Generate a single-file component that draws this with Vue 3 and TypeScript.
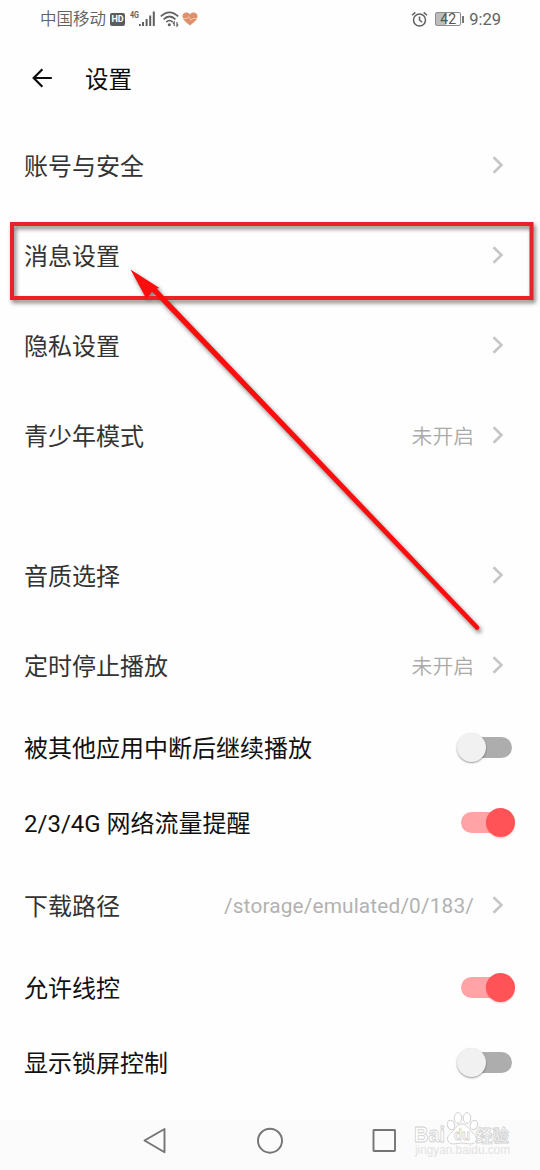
<script setup lang="ts">
interface Row {
  label: string
  kind: 'link' | 'switch'
  value?: string
  path?: boolean
  on?: boolean
}

const groups: Row[][] = [
  [
    { label: '账号与安全', kind: 'link' },
    { label: '消息设置', kind: 'link' },
    { label: '隐私设置', kind: 'link' },
    { label: '青少年模式', kind: 'link', value: '未开启' },
  ],
  [
    { label: '音质选择', kind: 'link' },
    { label: '定时停止播放', kind: 'link', value: '未开启' },
    { label: '被其他应用中断后继续播放', kind: 'switch', on: false },
    { label: '2/3/4G 网络流量提醒', kind: 'switch', on: true },
    { label: '下载路径', kind: 'link', value: '/storage/emulated/0/183/', path: true },
    { label: '允许线控', kind: 'switch', on: true },
    { label: '显示锁屏控制', kind: 'switch', on: false },
  ],
]
</script>

<template>
  <div class="screen">
    <header class="status">
      <div class="status-left">
        <span class="carrier">中国移动</span>
        <span class="hd">HD</span>
        <svg class="signal" width="28" height="20" viewBox="0 0 28 20">
          <text x="0" y="8" class="net" textLength="9" lengthAdjust="spacingAndGlyphs">4G</text>
          <g fill="#606060">
            <rect x="9" y="14" width="1.8" height="2" />
            <rect x="12" y="12" width="2" height="4" />
            <rect x="15.6" y="9" width="2" height="7" />
            <rect x="19.2" y="5.5" width="2" height="10.5" />
            <rect x="22.8" y="1.5" width="2" height="14.5" />
          </g>
        </svg>
        <svg class="wifi" width="20" height="18" viewBox="0 0 20 18">
          <g fill="none" stroke="#606060" stroke-width="1.7">
            <path d="M.8 6.4Q9.5-1.8 18.200 6.4" />
            <path d="M3.6 9.3Q9.5 3.7 15.4 9.3" />
            <path d="M6.300 12.200Q9.500 8.800 12.700 12.200" />
          </g>
          <circle cx="9.3" cy="14.8" r="1.5" fill="#606060" />
          <path d="M14.2 16v-3.800l-1.200 1.400M17 12v3.900l1.200-1.400" stroke="#606060" stroke-width="1.2" fill="none" />
        </svg>
        <svg class="heart" width="16" height="14" viewBox="0 0 16 14">
          <path d="M8 13.5C5 11 .5 8 .5 4.3.5.3 5.8-.7 8 2.5 10.200-.7 15.500.3 15.500 4.300 15.500 8 11 11 8 13.500Z" fill="#dc906c" />
          <path d="M1 6.500h4l1.800-1.700 2.200 3.400 1.700-1.700H15" stroke="#f3cdb9" stroke-width=".9" fill="none" />
        </svg>
      </div>
      <div class="status-right">
        <svg width="17" height="17" viewBox="0 0 17 17" fill="none" stroke="#606060" stroke-width="1.500">
          <circle cx="8.500" cy="9" r="6" />
          <path d="M8.500 5.500V9l2.600 2.200M1 4.200L4.300 1.400M16 4.200L12.700 1.400" />
        </svg>
        <span class="battery"><span>42</span></span>
        <span class="time">9:29</span>
      </div>
    </header>

    <div class="titlebar">
      <svg width="20" height="20" viewBox="0 0 20 20" fill="none" stroke="#0c0c0c" stroke-width="2.200">
        <path d="M19.800 10H2M10.400 1.200L1.700 10l8.700 8.800" />
      </svg>
      <h1>设置</h1>
    </div>

    <main>
      <section v-for="(group, g) in groups" :key="g" class="group">
        <div v-for="row in group" :key="row.label" class="row" :class="row.kind">
          <span class="label">{{ row.label }}</span>
          <template v-if="row.kind === 'link'">
            <span v-if="row.value" class="value" :class="{ path: row.path }">{{ row.value }}</span>
            <svg class="chevron" width="12" height="18" viewBox="0 0 12 18">
              <path d="M1.500 1.200L9.500 9l-8 7.800" fill="none" stroke="#c6c6c6" stroke-width="2.600" />
            </svg>
          </template>
          <span v-else class="toggle" :class="{ on: row.on }"><i></i></span>
        </div>
      </section>
    </main>

    <nav class="navbar">
      <svg width="540" height="50" viewBox="0 0 540 50" fill="none" stroke="#747474" stroke-width="1.900" stroke-linejoin="round">
        <path d="M144.500 20.500L164.500 9v23.300Z" />
        <circle cx="270" cy="20.700" r="12" />
        <rect x="373.500" y="10" width="21.500" height="21" rx=".5" />
      </svg>
    </nav>

    <svg class="watermark" width="106" height="50" viewBox="0 0 106 50">
      <g fill="#fff" stroke="#d2d2d2" stroke-width="1">
        <ellipse cx="41" cy="15" rx="3.600" ry="4.800" transform="rotate(-20 41 15)" />
        <ellipse cx="48" cy="8" rx="3.800" ry="5.300" />
        <ellipse cx="57" cy="8" rx="3.800" ry="5.300" />
        <ellipse cx="64" cy="15" rx="3.600" ry="4.800" transform="rotate(20 64 15)" />
        <path d="M52 14c-5 0-6 4-9 7s-7 6-5 10c3 5 9 2 14 2s11 3 14-2c2-4-2-7-5-10s-4-7-9-7Z" />
      </g>
      <text x="4" y="32" class="wm-main" textLength="31" lengthAdjust="spacingAndGlyphs">Bai</text>
      <text x="44" y="30" class="wm-du" textLength="16" lengthAdjust="spacingAndGlyphs">du</text>
      <text x="66" y="32" class="wm-cn">经验</text>
      <text x="5" y="43.500" class="wm-url" textLength="95" lengthAdjust="spacingAndGlyphs">jingyan.baidu.com</text>
    </svg>

    <svg class="annotation" width="540" height="1170" viewBox="0 0 540 1170">
      <rect x="12" y="224" width="519.500" height="74" fill="none" stroke="#e82228" stroke-width="4" />
      <g fill="#f90d0d">
        <path d="M151 290.500L475.300 629a2.200 2.200 0 0 0 3.400-3L155.500 287.300Z" />
        <path d="M130.500 269.500L159.500 288 153.500 289.500 151 293 146.500 299Z" />
      </g>
    </svg>
  </div>
</template>

<style>
body {
  margin: 0;
  background: #fefefe;
}
</style>

<style scoped>
.screen {
  position: relative;
  width: 540px;
  height: 1170px;
  overflow: hidden;
  background: #fefefe;
  color: #333;
  font-family: Roboto, "Noto Sans CJK SC", sans-serif;
  display: flex;
  flex-direction: column;
}
.status {
  height: 38px;
  display: flex;
  justify-content: space-between;
  align-items: center;
  padding: 0 39px 0 40px;
  box-sizing: border-box;
  color: #626262;
}
.status-left,
.status-right {
  display: flex;
  align-items: center;
}
.carrier {
  padding-top: 2px;
  font-size: 16.500px;
  line-height: 24px;
  font-weight: 350;
}
.hd {
  width: 15px;
  height: 13px;
  margin-left: 4px;
  border-radius: 2px;
  background: #5c5c5c;
  color: #fff;
  font-size: 9px;
  font-weight: 700;
  line-height: 13px;
  text-align: center;
}
.signal {
  margin: 1px 0 0 5px;
}
.net {
  font: 700 9px Roboto, sans-serif;
  fill: #606060;
}
.wifi {
  margin-left: 2px;
}
.heart {
  margin-left: 2px;
}
.battery {
  position: relative;
  box-sizing: border-box;
  width: 26px;
  height: 14px;
  margin: 0 8px 0 7px;
  border: 1px solid #8d8d8d;
  border-radius: 2px;
  background: linear-gradient(90deg, #bdbdbd 42%, #fefefe 42%);
  font-size: 14px;
  line-height: 12px;
  text-align: center;
  color: #555;
}
.battery::after {
  content: "";
  position: absolute;
  right: -4px;
  top: 3px;
  width: 2px;
  height: 7px;
  background: #777;
}
.time {
  padding-top: 1px;
  font-size: 16.500px;
  line-height: 20px;
}
.titlebar {
  height: 82px;
  display: flex;
  align-items: flex-start;
  padding: 22px 0 0 32px;
  box-sizing: border-box;
}
.titlebar svg {
  margin-top: 8px;
}
h1 {
  margin: 2px 0 0 33px;
  font-size: 23.500px;
  line-height: 36px;
  font-weight: 400;
  color: #0c0c0c;
}
.group + .group {
  margin-top: 50px;
}
.row {
  display: flex;
  align-items: center;
  height: 90px;
  padding: 0 36px 0 24px;
  box-sizing: border-box;
}
.row.switch {
  height: 75px;
  padding-right: 25px;
  color: #111;
}
.label {
  padding-top: 3px;
  font-size: 24px;
  line-height: 36px;
  white-space: pre;
}
.switch .label {
  padding-top: 2px;
}
.value {
  margin-left: auto;
  padding-top: 3px;
  font-size: 20.800px;
  line-height: 30px;
  font-weight: 350;
  color: #aaa;
}
.value.path {
  padding-top: 1px;
  font-weight: 400;
  color: #b2b2b2;
  letter-spacing: .16px;
}
.chevron {
  margin-left: auto;
}
.value + .chevron {
  margin-left: 18px;
}
.toggle {
  position: relative;
  width: 51px;
  height: 21px;
  margin: 0 3px 0 auto;
  border-radius: 11px;
  background: #adadad;
}
.toggle i {
  position: absolute;
  left: -4px;
  top: -4px;
  width: 29px;
  height: 29px;
  border-radius: 50%;
  background: #f1f1f1;
  box-shadow: 0 1px 2px rgba(0, 0, 0, .4);
}
.toggle.on {
  background: #ffa3a6;
}
.toggle.on i {
  left: 25px;
  background: #ff5357;
  box-shadow: 0 1px 2px rgba(190, 70, 70, .3);
}
.navbar {
  height: 50px;
  margin-top: auto;
  background: #fbfbfb;
}
.navbar svg {
  display: block;
}
.watermark {
  position: absolute;
  left: 410px;
  top: 1110px;
}
.watermark text {
  font-family: "Liberation Sans", "Noto Sans CJK SC", sans-serif;
  fill: #fff;
  stroke: #d0d0d0;
  stroke-width: .8px;
}
.wm-main {
  font-size: 22px;
  font-weight: 700;
}
.wm-du {
  font-size: 15px;
  font-weight: 700;
}
.wm-cn {
  font-size: 16.500px;
  font-weight: 700;
}
.watermark .wm-url {
  font-size: 12px;
  fill: #e2e2e2;
  stroke: none;
}
.annotation {
  position: absolute;
  left: 0;
  top: 0;
  pointer-events: none;
  filter: drop-shadow(2px 3px 2px rgba(0, 0, 0, .5));
}
</style>
